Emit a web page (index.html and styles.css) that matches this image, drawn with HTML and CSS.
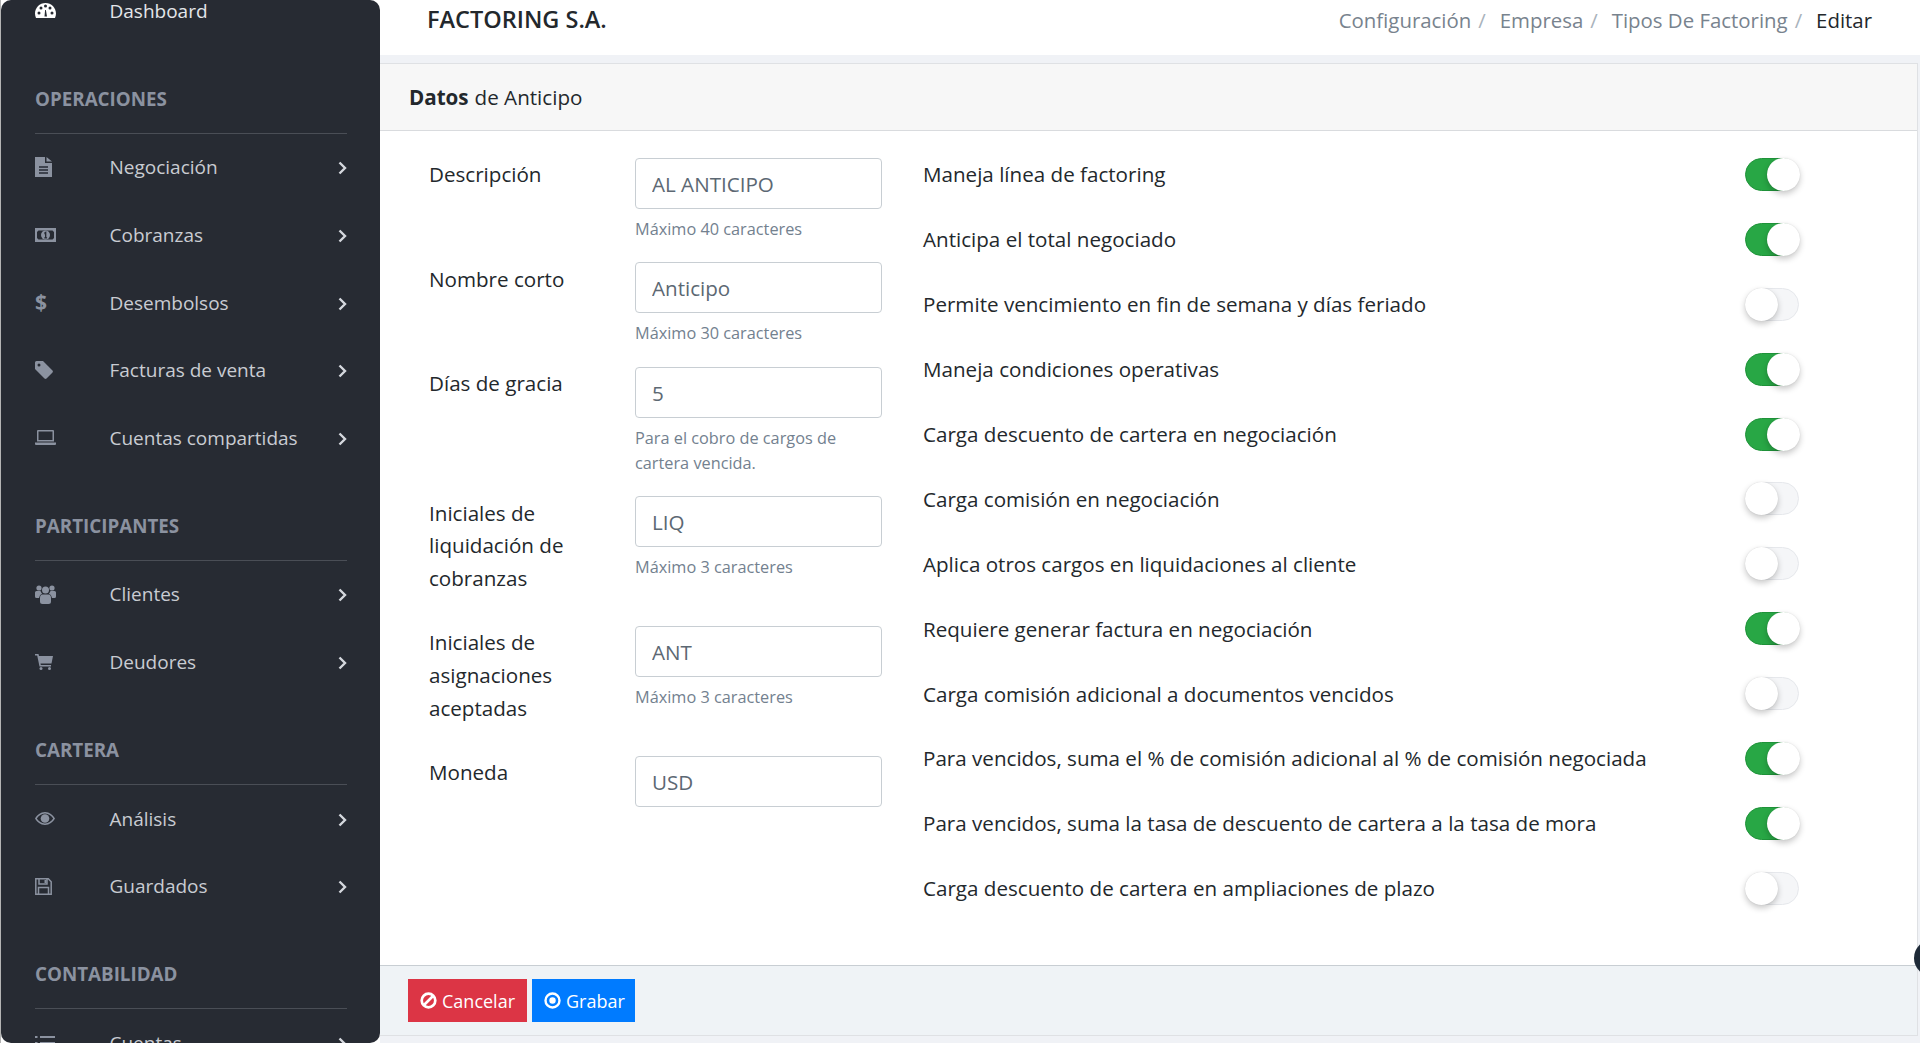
FILE: index.html
```html
<!DOCTYPE html>
<html lang="es">
<head>
<meta charset="utf-8">
<title>Factoring S.A.</title>
<link rel="stylesheet" href="styles.css">
</head>
<body>
<div class="app">
  <aside class="sidebar">
    <nav class="nav">
      <a class="item dash"><span class="ico"><svg width="21" height="15" viewBox="0 0 21 15"><path fill="#fff" fill-rule="evenodd" d="M10.5 0C4.700 0 0 4.700 0 10.500c0 1.600.4 3.100 1 4.500h19c.6-1.400 1-2.900 1-4.500C21 4.700 16.300 0 10.500 0zM4 11.500a1.500 1.500 0 1 1 0-3 1.500 1.500 0 0 1 0 3zm2-5a1.500 1.500 0 1 1 0-3 1.500 1.500 0 0 1 0 3zm4.500-2a1.500 1.500 0 1 1 0-3 1.500 1.500 0 0 1 0 3zm1.500 9H9.500l.6-6.500h.8l1.100 6.500zm3-7a1.500 1.500 0 1 1 0-3 1.500 1.500 0 0 1 0 3zm2 5a1.500 1.500 0 1 1 0-3 1.500 1.500 0 0 1 0 3z"/></svg></span><span class="lbl">Dashboard</span></a>

      <h6 class="sec">OPERACIONES</h6>
      <a class="item"><span class="ico"><svg width="18" height="20" viewBox="0 0 18 20"><path fill="#8b92a0" d="M0 0h10v6h7v14H0zM11.500 0l5.500 4.500h-5.500z"/><path stroke="#262a33" stroke-width="1.500" d="M4 10h9M4 13h9M4 16h9"/></svg></span><span class="lbl">Negociación</span><svg class="chev" width="9" height="14" viewBox="0 0 9 14"><path fill="none" stroke="#d5d8de" stroke-width="2.400" d="M1.500 1.500 7 7l-5.500 5.500"/></svg></a>
      <a class="item"><span class="ico"><svg width="21" height="14" viewBox="0 0 21 14"><path fill="#8b92a0" fill-rule="evenodd" d="M0 0h21v14H0zM3.500 2.500 2 4v6l1.500 1.500h14L19 10V4l-1.500-1.500z"/><circle cx="10.500" cy="7" r="4.500" fill="#8b92a0"/><path stroke="#262a33" stroke-width="1.300" d="M9.500 5l1.200-.6V9.800M9.300 9.800h2.800"/></svg></span><span class="lbl">Cobranzas</span><svg class="chev" width="9" height="14" viewBox="0 0 9 14"><path fill="none" stroke="#d5d8de" stroke-width="2.400" d="M1.500 1.500 7 7l-5.500 5.500"/></svg></a>
      <a class="item"><span class="ico ico-text">$</span><span class="lbl">Desembolsos</span><svg class="chev" width="9" height="14" viewBox="0 0 9 14"><path fill="none" stroke="#d5d8de" stroke-width="2.400" d="M1.500 1.500 7 7l-5.500 5.500"/></svg></a>
      <a class="item"><span class="ico"><svg width="18" height="18" viewBox="0 0 18 18"><path fill="#8b92a0" fill-rule="evenodd" d="M1.500 0H8l9.500 9.500q.8 1 0 2l-6 6q-1 .8-2 0L0 8V1.500Q0 0 1.500 0zM4 2.500a1.500 1.500 0 1 0 0 3 1.500 1.500 0 0 0 0-3z"/></svg></span><span class="lbl">Facturas de venta</span><svg class="chev" width="9" height="14" viewBox="0 0 9 14"><path fill="none" stroke="#d5d8de" stroke-width="2.400" d="M1.500 1.500 7 7l-5.500 5.500"/></svg></a>
      <a class="item"><span class="ico"><svg width="21" height="15" viewBox="0 0 21 15"><path fill="#8b92a0" fill-rule="evenodd" d="M3 0h15a1 1 0 0 1 1 1v10.500H2V1a1 1 0 0 1 1-1zm.5 1.500v8.500h14V1.500zM0 12.500h21V14a1 1 0 0 1-1 1H1a1 1 0 0 1-1-1z"/></svg></span><span class="lbl">Cuentas compartidas</span><svg class="chev" width="9" height="14" viewBox="0 0 9 14"><path fill="none" stroke="#d5d8de" stroke-width="2.400" d="M1.500 1.500 7 7l-5.500 5.500"/></svg></a>

      <h6 class="sec">PARTICIPANTES</h6>
      <a class="item"><span class="ico"><svg width="21" height="19" viewBox="0 0 21 19"><g fill="#8b92a0"><circle cx="4" cy="3" r="2.600"/><circle cx="17" cy="3" r="2.600"/><circle cx="10.500" cy="5" r="3.500"/><path d="M0 7.500q0-1.500 1.500-1.500h4q.6 1.600 1.600 2.400Q4.500 9.500 4 13H1.500Q0 13 0 11.500zM21 7.500q0-1.500-1.500-1.500h-4q-.6 1.600-1.600 2.400 2.600 1.100 3.100 4.600h2.500q1.500 0 1.500-1.500zM7.500 9.500h6q2.500 0 2.500 3.500v3.500q0 2.500-2.500 2.500h-6Q5 19 5 16.500V13q0-3.500 2.500-3.500z"/></g></svg></span><span class="lbl">Clientes</span><svg class="chev" width="9" height="14" viewBox="0 0 9 14"><path fill="none" stroke="#d5d8de" stroke-width="2.400" d="M1.500 1.500 7 7l-5.500 5.500"/></svg></a>
      <a class="item"><span class="ico"><svg width="18" height="16" viewBox="0 0 18 16"><g fill="#8b92a0"><path d="M0 0h3.500l.5 2h14l-1.500 7.500H5.500l.3 1.500H16v1.500H4.500L2.200 1.500H0z"/><circle cx="6" cy="14.500" r="1.500"/><circle cx="14.500" cy="14.500" r="1.500"/></g></svg></span><span class="lbl">Deudores</span><svg class="chev" width="9" height="14" viewBox="0 0 9 14"><path fill="none" stroke="#d5d8de" stroke-width="2.400" d="M1.500 1.500 7 7l-5.500 5.500"/></svg></a>

      <h6 class="sec">CARTERA</h6>
      <a class="item"><span class="ico"><svg width="20" height="13" viewBox="0 0 20 13"><path fill="#8b92a0" fill-rule="evenodd" d="M10 0c4.500 0 8 3 10 6.500C18 10 14.500 13 10 13S2 10 0 6.500C2 3 5.500 0 10 0zM10 1.500c-3.500 0-6.300 2.200-8.200 5 1.900 2.800 4.700 5 8.200 5s6.300-2.200 8.200-5c-1.900-2.800-4.700-5-8.200-5z"/><circle cx="10" cy="6.500" r="4.300" fill="#8b92a0"/></svg></span><span class="lbl">Análisis</span><svg class="chev" width="9" height="14" viewBox="0 0 9 14"><path fill="none" stroke="#d5d8de" stroke-width="2.400" d="M1.500 1.500 7 7l-5.500 5.500"/></svg></a>
      <a class="item"><span class="ico"><svg width="17" height="17" viewBox="0 0 17 17"><path fill="none" stroke="#8b92a0" stroke-width="1.500" d="M.8.800h12.500l2.900 2.900v12.500H.8zM4 1v5h8V1M3.500 16v-6.500h10V16"/><path fill="#8b92a0" d="M9.500 2h2v3h-2z"/></svg></span><span class="lbl">Guardados</span><svg class="chev" width="9" height="14" viewBox="0 0 9 14"><path fill="none" stroke="#d5d8de" stroke-width="2.400" d="M1.500 1.500 7 7l-5.500 5.500"/></svg></a>

      <h6 class="sec">CONTABILIDAD</h6>
      <a class="item"><span class="ico"><svg width="20" height="16" viewBox="0 0 20 16"><path stroke="#8b92a0" stroke-width="2" d="M0 2h2.500M5 2h15M0 8h2.500M5 8h15M0 14h2.500M5 14h15"/></svg></span><span class="lbl">Cuentas</span><svg class="chev" width="9" height="14" viewBox="0 0 9 14"><path fill="none" stroke="#d5d8de" stroke-width="2.400" d="M1.500 1.500 7 7l-5.500 5.500"/></svg></a>
    </nav>
  </aside>

  <main class="main">
    <header class="topbar">
      <div class="brand">FACTORING S.A.</div>
      <ol class="crumbs">
        <li class="crumb">Configuración</li>
        <li class="crumb">Empresa</li>
        <li class="crumb">Tipos De Factoring</li>
        <li class="crumb current">Editar</li>
      </ol>
    </header>

    <section class="card">
      <div class="card-head"><strong>Datos</strong> de Anticipo</div>
      <div class="card-body">
        <div class="fields">
          <div class="field">
            <label class="f-label">Descripción</label>
            <div class="f-ctl"><input class="input" value="AL ANTICIPO"><small class="hint">Máximo 40 caracteres</small></div>
          </div>
          <div class="field">
            <label class="f-label">Nombre corto</label>
            <div class="f-ctl"><input class="input" value="Anticipo"><small class="hint">Máximo 30 caracteres</small></div>
          </div>
          <div class="field">
            <label class="f-label">Días de gracia</label>
            <div class="f-ctl"><input class="input" value="5"><small class="hint">Para el cobro de cargos de cartera vencida.</small></div>
          </div>
          <div class="field">
            <label class="f-label">Iniciales de liquidación de cobranzas</label>
            <div class="f-ctl"><input class="input" value="LIQ"><small class="hint">Máximo 3 caracteres</small></div>
          </div>
          <div class="field">
            <label class="f-label">Iniciales de asignaciones aceptadas</label>
            <div class="f-ctl"><input class="input" value="ANT"><small class="hint">Máximo 3 caracteres</small></div>
          </div>
          <div class="field">
            <label class="f-label">Moneda</label>
            <div class="f-ctl"><input class="input" value="USD"></div>
          </div>
        </div>
        <ul class="opts">
          <li class="opt"><span>Maneja línea de factoring</span><span class="sw on"></span></li>
          <li class="opt"><span>Anticipa el total negociado</span><span class="sw on"></span></li>
          <li class="opt"><span>Permite vencimiento en fin de semana y días feriado</span><span class="sw"></span></li>
          <li class="opt"><span>Maneja condiciones operativas</span><span class="sw on"></span></li>
          <li class="opt"><span>Carga descuento de cartera en negociación</span><span class="sw on"></span></li>
          <li class="opt"><span>Carga comisión en negociación</span><span class="sw"></span></li>
          <li class="opt"><span>Aplica otros cargos en liquidaciones al cliente</span><span class="sw"></span></li>
          <li class="opt"><span>Requiere generar factura en negociación</span><span class="sw on"></span></li>
          <li class="opt"><span>Carga comisión adicional a documentos vencidos</span><span class="sw"></span></li>
          <li class="opt"><span>Para vencidos, suma el % de comisión adicional al % de comisión negociada</span><span class="sw on"></span></li>
          <li class="opt"><span>Para vencidos, suma la tasa de descuento de cartera a la tasa de mora</span><span class="sw on"></span></li>
          <li class="opt"><span>Carga descuento de cartera en ampliaciones de plazo</span><span class="sw"></span></li>
        </ul>
      </div>
      <div class="card-foot">
        <button class="btn danger"><svg width="17" height="17" viewBox="0 0 17 17"><circle cx="8.500" cy="8.500" r="6.800" fill="none" stroke="#fff" stroke-width="2.700"/><path stroke="#fff" stroke-width="2.700" d="M4 13 13 4"/></svg>Cancelar</button>
        <button class="btn primary"><svg width="17" height="17" viewBox="0 0 17 17"><circle cx="8.500" cy="8.500" r="7" fill="none" stroke="#fff" stroke-width="2.400"/><circle cx="8.500" cy="8.500" r="3.200" fill="#fff"/></svg>Grabar</button>
      </div>
    </section>
    <span class="fab"></span>
  </main>
</div>
</body>
</html>
```

FILE: styles.css
```css
* { box-sizing: border-box; }
html, body { margin: 0; height: 100%; }
body {
  background: #fff;
  font-family: "Open Sans", "Noto Sans", sans-serif;
  overflow: hidden;
  color: #23282c;
}
.app { display: flex; height: 1043px; overflow: hidden; border-left: 1px solid #b4b4b4; }

/* Sidebar */
.sidebar {
  flex: 0 0 379px;
  background: #272b33;
  border-radius: 10px;
  overflow: hidden;
}
.nav { margin-top: -23px; }
.item {
  display: flex;
  align-items: center;
  height: 67.6px;
  padding: 0 33px 0 34px;
  color: #c9ccd2;
  font-size: 19px;
}
.dash { color: #e4e6ea; }
.ico { flex: 0 0 74.5px; display: flex; align-items: center; }
.ico-text { color: #8b92a0; font-weight: 700; font-size: 21px; line-height: 1; }
.lbl { flex: 1; white-space: nowrap; }
.chev { flex: none; position: relative; top: 1px; }
.sec {
  margin: 0 33px 0 34px;
  padding: 42px 0 22px;
  border-bottom: 1px solid #4a4e56;
  color: #8b92a0;
  font-size: 18.8px;
  font-weight: 700;
  line-height: 24px;
  height: 89px;
}

/* Main */
.main {
  flex: 1;
  min-width: 0;
  position: relative;
  display: flex;
  flex-direction: column;
  background: #f0f2f6;
  overflow: hidden;
}
.topbar {
  flex: 0 0 55px;
  display: flex;
  align-items: flex-start;
  justify-content: space-between;
  background: #fff;
  padding: 3px 48px 0 47px;
}
.brand { font-size: 23.5px; font-weight: 600; color: #23282c; line-height: 32px; }
.crumbs { list-style: none; margin: 0; padding: 0; display: flex; font-size: 20.4px; line-height: 35px; }
.crumb { color: #78838e; }
.crumb::after { content: "/"; color: #a9b3bc; padding: 0 14px 0 7px; }
.current { color: #23282c; }
.current::after { content: none; }

.card {
  flex: 1;
  margin: 8px 2px 7px 0;
  display: flex;
  flex-direction: column;
  background: #fff;
  border: solid #dfe1e4;
  border-width: 1px 1px 1px 0;
}
.card-head {
  flex: 0 0 67px;
  display: flex;
  align-items: center;
  gap: 6px;
  padding-left: 29px;
  background: #f7f7f7;
  border-bottom: 1px solid #d9dbde;
  font-size: 20.6px;
}
.card-body {
  flex: 1;
  display: flex;
  padding: 26.5px 0 0 49px;
  font-size: 20.6px;
}
.fields { flex: 0 0 453px; }
.field { display: flex; align-items: flex-start; margin-bottom: 20.5px; }
.f-label { flex: 0 0 206px; padding: .5px 30px 0 0; line-height: 32.8px; margin-bottom: 10.5px; }
.f-ctl { flex: 0 0 247px; }
.input {
  display: block;
  width: 100%;
  height: 51px;
  padding: 1px 16px 0;
  border: 1px solid #c8ced3;
  border-radius: 4px;
  background: #fff;
  color: #5c6873;
  font: inherit;
}
.hint {
  display: block;
  margin-top: 8px;
  color: #73818f;
  font-size: 16.3px;
  line-height: 25px;
}
.opts { list-style: none; margin: -15.5px 0 0 41px; padding: 0; flex: 0 0 876px; }
.opt { display: flex; align-items: center; justify-content: space-between; height: 64.9px; }
.sw {
  position: relative;
  flex: none;
  width: 54px;
  height: 33px;
  border-radius: 17px;
  background: #f5f6f8;
  border: 1px solid #e6e8ec;
}
.sw::after {
  content: "";
  position: absolute;
  top: -1px;
  left: -1px;
  width: 33px;
  height: 33px;
  border-radius: 50%;
  background: #fff;
  box-shadow: 0 3px 6px rgba(0,0,0,.22), 0 0 1px rgba(0,0,0,.15);
}
.sw.on { background: #28a745; border-color: #1f9239; }
.sw.on::after { left: 21px; }

.card-foot {
  flex: 0 0 70px;
  display: flex;
  align-items: center;
  gap: 5px;
  padding-left: 28px;
  background: #eff3f6;
  border-top: 1px solid #c8ced3;
}
.btn {
  display: flex;
  align-items: center;
  gap: 5px;
  height: 43px;
  padding: 0 12px;
  border: 0;
  color: #fff;
  font-family: inherit;
  font-size: 18px;
}
.danger { background: #dc3545; }
.primary { background: #007bff; padding-right: 10px; }
.fab {
  position: absolute;
  right: -30px;
  top: 940px;
  width: 36px;
  height: 36px;
  border-radius: 50%;
  background: #1e2a38;
}
```
